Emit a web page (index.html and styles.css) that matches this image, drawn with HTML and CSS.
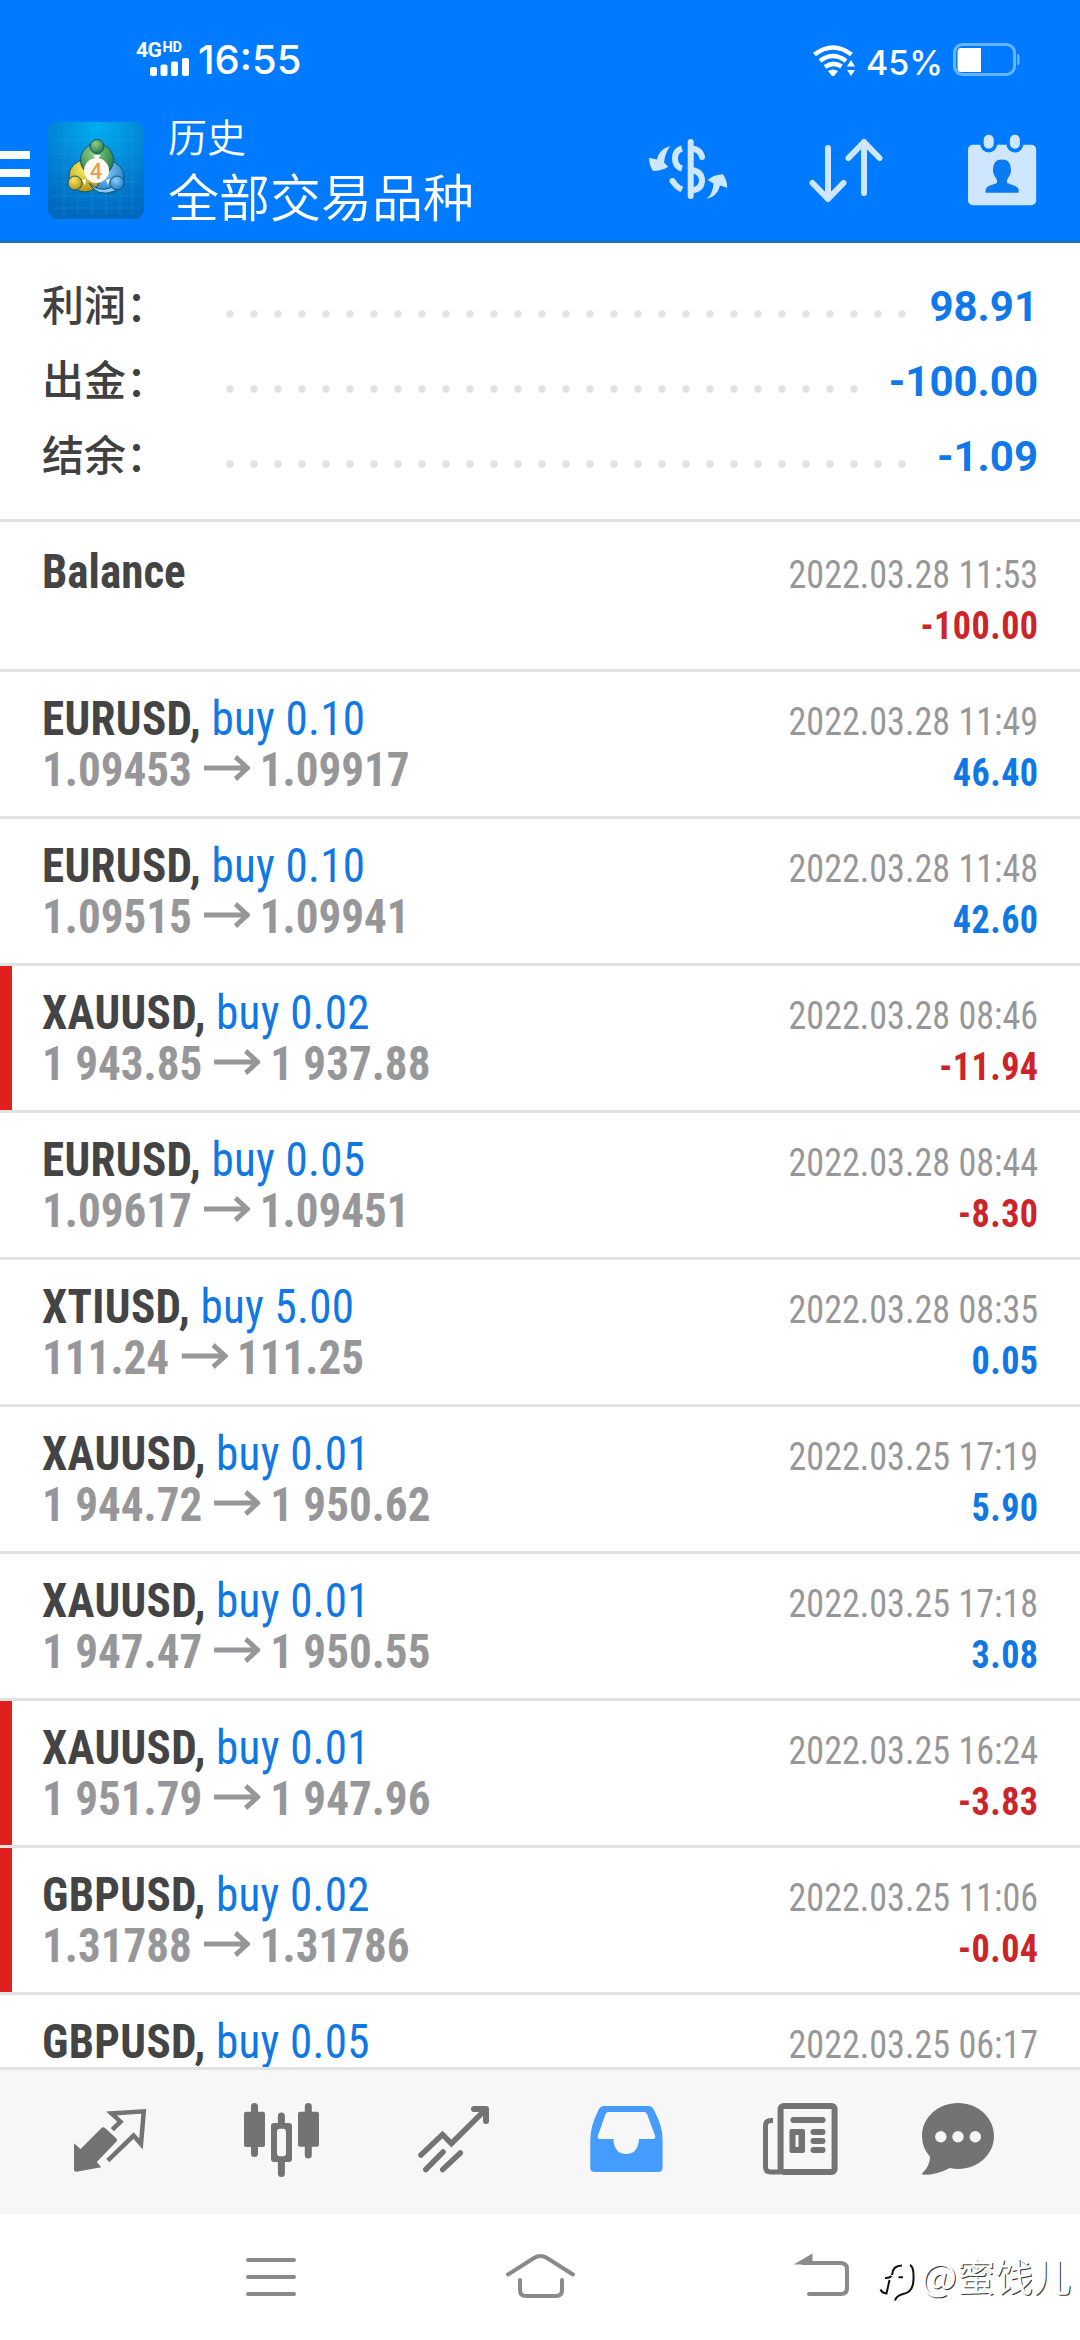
FILE: index.html
```
<!DOCTYPE html>
<html lang="zh-CN">
<head>
<meta charset="utf-8">
<title>历史</title>
<link rel="stylesheet" href="styles.css">
</head>
<body>
<div class="screen">
  <header class="header">
    <div class="status">
      <div class="signal">
        <div class="net"><span class="net-type">4G</span><span class="net-hd">HD</span></div>
        <svg class="bars" width="40" height="18" viewBox="0 0 40 18" fill="#fff"><rect x="0" y="9" width="7" height="9" rx="2"/><rect x="10.5" y="6.5" width="7" height="11.500" rx="2"/><rect x="21" y="3.500" width="7" height="14.500" rx="2"/><rect x="32" y="0" width="7" height="18" rx="2"/></svg>
      </div>
      <span class="clock">16:55</span>
      <svg class="wifi" width="44" height="34" viewBox="0 0 44 34"><g fill="none" stroke="#fff" stroke-width="4.600"><path d="M1.500 10.500Q20 -3.500 38.500 10.500"/><path d="M7 17Q20 7 33 17"/><path d="M12 23Q20 17 28.500 22.500"/></g><path d="M15 27Q20 24 25 27L21.500 31.500Q20 32.500 18.500 31.500ZM38 16L42 22.500H34ZM34 26H42L38 32Z" fill="#fff"/></svg>
      <span class="percent">45%</span>
      <svg class="battery" width="68" height="34" viewBox="0 0 68 34"><rect x="1.500" y="1.500" width="60" height="30" rx="8" fill="none" stroke="#66b5ff" stroke-width="3"/><path d="M8 5H28V29H8Q4.500 29 4.500 25V9Q4.500 5 8 5Z" fill="#fff"/><path d="M64 11H65Q66.500 11 66.500 13V20Q66.500 22 65 22H64Z" fill="#66b5ff"/></svg>
    </div>
    <div class="appbar">
      <div class="menu"><i></i><i></i><i></i></div>
      <svg class="logo" width="96" height="97" viewBox="0 0 96 97">
        <defs>
          <radialGradient id="tile" cx=".52" cy=".05" r=".95"><stop offset="0" stop-color="#00aef0"/><stop offset=".5" stop-color="#0386d6"/><stop offset="1" stop-color="#0068bd"/></radialGradient>
          <radialGradient id="green" cx=".4" cy=".3" r=".8"><stop offset="0" stop-color="#8fcf88"/><stop offset="1" stop-color="#15703a"/></radialGradient>
          <radialGradient id="gold" cx=".4" cy=".3" r=".8"><stop offset="0" stop-color="#fbe75a"/><stop offset="1" stop-color="#a88a10"/></radialGradient>
          <radialGradient id="sky" cx=".4" cy=".3" r=".8"><stop offset="0" stop-color="#8fcdf8"/><stop offset="1" stop-color="#1273c4"/></radialGradient>
        </defs>
        <rect width="96" height="97" rx="9" fill="url(#tile)"/>
        <path d="M16 4V93M30 4V93M44 4V93M58 4V93M72 4V93M84 4V93M4 18H92M4 32H92M4 46H92M4 60H92M4 74H92M4 86H92" stroke="#38b7f2" stroke-opacity=".22"/>
        <g stroke="#0b5577" stroke-width="1">
          <circle cx="60" cy="55" r="16" fill="url(#sky)"/><circle cx="37" cy="54" r="16" fill="url(#gold)"/><circle cx="49" cy="38" r="16.500" fill="url(#green)"/>
          <path d="M41 61Q50 70 62 66Q70 62 72 55Q76 65 67 69Q49 76 41 61Z" fill="#87c8f2"/>
          <circle cx="49" cy="24.500" r="7" fill="url(#green)"/><circle cx="27" cy="61" r="7" fill="url(#gold)"/><circle cx="69" cy="61" r="7" fill="url(#sky)"/>
        </g>
        <path d="M45 33H53L50 37H48ZM34 58L38 57L37 63ZM62 57L60 63L58 58Z" fill="#fff"/>
        <circle cx="48.500" cy="48.500" r="12.500" fill="#fffaf4"/>
        <text x="48" y="56.500" class="logo-digit">4</text>
      </svg>
      <div class="titles"><div class="title">历史</div><div class="subtitle">全部交易品种</div></div>
      <div class="actions">
        <svg width="90" height="76" viewBox="0 0 90 76"><g fill="none" stroke="#cfe6ff" stroke-width="6"><path d="M44.700 10V64" stroke-linecap="round"/><path d="M36 16.500Q29 18.500 29 26.500T36 36.500"/><path d="M36 57.500Q29 54 27 49"/><path d="M46 16.500Q54 17.500 56 24.500"/><path d="M46 38Q56 40 56 48.500T46 58.500"/></g><g fill="#cfe6ff"><circle cx="56" cy="25" r="3"/><circle cx="26.500" cy="49" r="3"/><path d="M24.300 14Q13 17 11 27.500L3 25.700Q3 33 7 39Q15 39 22.300 34.700L18 30.500Q19 21 24.300 14ZM60.300 67Q67 62 67.500 51.500L61.700 48Q68 42.500 77 42.300Q81 48 81.300 55.700L74 53.500Q71 65 60.300 67Z"/></g></svg>
        <svg width="90" height="76" viewBox="0 0 90 76"><path d="M28 16V67M12.500 51L28 67L43.500 51M64 61V10M48.500 26L64 10L79.500 26" fill="none" stroke="#cfe6ff" stroke-width="6" stroke-linecap="round" stroke-linejoin="round"/></svg>
        <svg class="calendar" width="90" height="76" viewBox="0 0 90 76"><rect x="10" y="12.700" width="68.200" height="60.600" rx="5" fill="#cfe6ff"/><g stroke-linecap="round"><path d="M30.700 8V12M56.900 8V12" stroke="#007bff" stroke-width="17"/><path d="M30.700 7.700V11.700M56.900 7.700V11.700" stroke="#cfe6ff" stroke-width="10"/></g><path d="M44 27.500C51 27.500 53 32 53 39C53 42 50 46 49 48V51C54 53 60.500 54 60.700 58V60.700H27.600V58C28 54 34 53 39 51V48C38 46 35 42 35 39C35 32 37 27.500 44 27.500Z" fill="#0b7bf3"/></svg>
      </div>
    </div>
  </header>

  <section class="summary">
    <div class="sum-row"><span class="sum-label">利润：</span><i class="dots short"></i><b>98.91</b></div>
    <div class="sum-row"><span class="sum-label">出金：</span><i class="dots long"></i><b>-100.00</b></div>
    <div class="sum-row"><span class="sum-label">结余：</span><i class="dots short"></i><b>-1.09</b></div>
  </section>

  <main class="deals">
    <article class="deal first"><div class="left"><p><b>Balance</b></p></div><div class="right"><p>2022.03.28 11:53</p><b class="loss">-100.00</b></div></article>
    <article class="deal"><div class="left"><p><b>EURUSD,</b> <span>buy 0.10</span></p><p class="price">1.09453<svg class="arrow" viewBox="0 0 50 26"><path d="M0 13H46M34 2L47 13L34 24"/></svg>1.09917</p></div><div class="right"><p>2022.03.28 11:49</p><b>46.40</b></div></article>
    <article class="deal"><div class="left"><p><b>EURUSD,</b> <span>buy 0.10</span></p><p class="price">1.09515<svg class="arrow" viewBox="0 0 50 26"><path d="M0 13H46M34 2L47 13L34 24"/></svg>1.09941</p></div><div class="right"><p>2022.03.28 11:48</p><b>42.60</b></div></article>
    <article class="deal stopped"><div class="left"><p><b>XAUUSD,</b> <span>buy 0.02</span></p><p class="price">1 943.85<svg class="arrow" viewBox="0 0 50 26"><path d="M0 13H46M34 2L47 13L34 24"/></svg>1 937.88</p></div><div class="right"><p>2022.03.28 08:46</p><b class="loss">-11.94</b></div></article>
    <article class="deal"><div class="left"><p><b>EURUSD,</b> <span>buy 0.05</span></p><p class="price">1.09617<svg class="arrow" viewBox="0 0 50 26"><path d="M0 13H46M34 2L47 13L34 24"/></svg>1.09451</p></div><div class="right"><p>2022.03.28 08:44</p><b class="loss">-8.30</b></div></article>
    <article class="deal"><div class="left"><p><b>XTIUSD,</b> <span>buy 5.00</span></p><p class="price">111.24<svg class="arrow" viewBox="0 0 50 26"><path d="M0 13H46M34 2L47 13L34 24"/></svg>111.25</p></div><div class="right"><p>2022.03.28 08:35</p><b>0.05</b></div></article>
    <article class="deal"><div class="left"><p><b>XAUUSD,</b> <span>buy 0.01</span></p><p class="price">1 944.72<svg class="arrow" viewBox="0 0 50 26"><path d="M0 13H46M34 2L47 13L34 24"/></svg>1 950.62</p></div><div class="right"><p>2022.03.25 17:19</p><b>5.90</b></div></article>
    <article class="deal"><div class="left"><p><b>XAUUSD,</b> <span>buy 0.01</span></p><p class="price">1 947.47<svg class="arrow" viewBox="0 0 50 26"><path d="M0 13H46M34 2L47 13L34 24"/></svg>1 950.55</p></div><div class="right"><p>2022.03.25 17:18</p><b>3.08</b></div></article>
    <article class="deal stopped"><div class="left"><p><b>XAUUSD,</b> <span>buy 0.01</span></p><p class="price">1 951.79<svg class="arrow" viewBox="0 0 50 26"><path d="M0 13H46M34 2L47 13L34 24"/></svg>1 947.96</p></div><div class="right"><p>2022.03.25 16:24</p><b class="loss">-3.83</b></div></article>
    <article class="deal stopped"><div class="left"><p><b>GBPUSD,</b> <span>buy 0.02</span></p><p class="price">1.31788<svg class="arrow" viewBox="0 0 50 26"><path d="M0 13H46M34 2L47 13L34 24"/></svg>1.31786</p></div><div class="right"><p>2022.03.25 11:06</p><b class="loss">-0.04</b></div></article>
    <article class="deal"><div class="left"><p><b>GBPUSD,</b> <span>buy 0.05</span></p></div><div class="right"><p>2022.03.25 06:17</p></div></article>
  </main>

  <nav class="tabs">
    <svg viewBox="0 0 80 80"><path d="M4 41.300L10.600 47L31.500 26Q33.300 24.300 35 26L46.500 36.500Q48 38 46.500 39.500L26.800 60L31.200 65.300L6.500 69.800Q4 70 4 67.500Z" fill="#737373"/><path d="M42.300 27.700L50.500 19.700L41.500 11.500L73.800 9.300L71 42L63.600 33.600L37.800 58.700" fill="none" stroke="#737373" stroke-width="4.500"/></svg>
    <svg viewBox="0 0 80 80"><g stroke="#737373" stroke-width="7" stroke-linecap="round"><path d="M12.500 4.500V51.500M39.400 14V71.500M66.300 4.500V53"/></g><g fill="#737373"><rect x="2" y="9.700" width="21" height="35.300" rx="2"/><rect x="29" y="21" width="21" height="39" rx="3"/><rect x="56" y="9.700" width="21" height="35" rx="2"/></g><rect x="35" y="26.700" width="9" height="27.600" rx="3" fill="#f7f7f7"/></svg>
    <svg viewBox="0 0 80 80"><g fill="none" stroke="#737373" stroke-width="5.500" stroke-linecap="round"><path d="M7 53L28.500 32.500L37.400 41.500L71 8M11.800 67.500L29 50M28.700 67.500L46.300 51"/><path d="M60 7H72V19" stroke-linejoin="round" stroke-width="6"/></g></svg>
    <svg viewBox="0 0 80 80"><path fill-rule="evenodd" d="M18 4H62Q66 4 68 8Q76.600 24 76.600 38V65.500Q76.600 70 72 70H9Q4.300 70 4.300 65.500V38Q4.300 24 12.500 8Q14.500 4 18 4ZM22.500 10Q20.500 10 19.500 12L12 33.500Q11 37 13.500 37H27.500Q28 52 40.300 52Q52 52 53 37H67Q70 37 69 33.500L61 12Q60 10 58 10Z" fill="#449cfd"/></svg>
    <svg class="news" viewBox="0 0 80 80"><g fill="none" stroke="#737373" stroke-width="6" stroke-linecap="round"><rect x="20.600" y="4" width="54" height="66" rx="3"/><path d="M13 18.500H11Q5.500 18.500 5.500 23.500V65Q5.500 70 11 70H20" stroke-width="5" stroke-linecap="butt"/><path d="M33.500 18H62.500M53.500 30H62.500M53.500 39H62.500M53.500 48H62.500"/></g><path fill-rule="evenodd" d="M31.500 27H43Q45 27 45 29V49Q45 51 43 51H31.500Q29.500 51 29.500 49V29Q29.500 27 31.500 27ZM35.500 33V45H38.500V33Z" fill="#737373"/></svg>
    <svg class="chat" viewBox="0 0 80 80"><path d="M40 1C60 1 76 15.500 76 34S60 67 40 67Q36 67 31.800 66Q19 73 5 72.800Q3.500 72 4.500 71Q12 64 12 54.700Q4 46 4 34C4 15.500 20 1 40 1Z" fill="#737373"/><g fill="#f7f7f7"><circle cx="22.800" cy="34.700" r="5.700"/><circle cx="40" cy="34.700" r="5.700"/><circle cx="57.300" cy="34.700" r="5.700"/></g></svg>
  </nav>
  <nav class="sysnav">
    <svg viewBox="0 0 90 60"><path d="M22 13H68M22 30H68M22 47H68"/></svg>
    <svg viewBox="0 0 90 60"><path d="M12 27.500L38 11Q44.500 7 51 11L77 27.500M24 33V43Q24 49 30 49H60Q66 49 66 43V33"/></svg>
    <svg viewBox="0 0 90 60"><path d="M37 16H74Q81 16 81 22V41Q81 47 75 47H43"/><path d="M35 15.500L44.500 10V15.500Z"/></svg>
    <div class="watermark">
      <svg width="44" height="46" viewBox="0 0 44 46"><g fill="none" stroke="#111" stroke-width="2"><path d="M15 19Q15.500 9.500 25 9.500M8 22Q12 22.500 14.500 20M21.500 21.300H26M12.500 24L9.500 37.500Q5 37 3.500 33.500"/><path d="M33 9Q37 11 36.500 22Q37 36 26 38Q19 40 18 44.500"/></g></svg>
      <span>@蜜饯儿</span>
    </div>
  </nav>
</div>
</body>
</html>
```
FILE: styles.css
```
* { box-sizing: border-box; margin: 0; padding: 0; }
body { background: #fff; font-family: Roboto, "Noto Sans CJK SC", sans-serif; }
.screen { width: 1080px; height: 2340px; display: flex; flex-direction: column; overflow: hidden; }

.header { flex: none; height: 243px; background: #007bff; border-bottom: 3px solid #1a70c4; color: #fff; }
.status { height: 112px; display: flex; align-items: flex-start; padding: 42px 59px 0 136px; }
.signal { width: 62px; display: flex; flex-direction: column; height: 36px; }
.net { display: flex; align-items: flex-start; height: 16px; font-weight: 700; }
.net-type { font-size: 21px; line-height: 16px; letter-spacing: -.5px; margin-right: 1px; }
.net-hd { font-size: 14.500px; line-height: 11px; }
.bars { margin-left: 14px; }
.clock { font: 500 40px/36px Inter, sans-serif; }
.wifi { margin: 2px 9px 0 auto; }
.percent { font: 500 34px/41px Inter, sans-serif; }
.battery { margin-left: 10px; margin-top: 1px; }

.appbar { display: flex; height: 128px; }
.menu { width: 48px; padding-top: 39px; display: flex; flex-direction: column; gap: 10px; }
.menu i { width: 30px; height: 8px; background: #fff; }
.logo { margin-top: 10px; }
.logo-digit { font: 500 22px Roboto, sans-serif; fill: #f09a4a; text-anchor: middle; }
.titles { margin: -2px 0 0 24px; font-family: "Noto Sans CJK SC", sans-serif; font-weight: 350; }
.title { font-size: 39px; line-height: 50px; }
.subtitle { font-size: 51px; line-height: 70px; }
.actions { margin-left: auto; padding: 20px 32px 0 0; display: flex; gap: 64px; }
.calendar { margin-left: 4px; }

.summary { flex: none; height: 279px; padding: 24px 42px 0; border-bottom: 3px solid #e2e2e2; }
.sum-row { height: 75px; display: flex; font-size: 42px; }
.sum-label { width: 176px; font-family: "Noto Sans CJK SC", sans-serif; font-weight: 500; line-height: 72px; color: #404040; }
.dots { height: 24px; margin-top: 35px; background: radial-gradient(circle, #e2e2e2 3.400px, transparent 4px) 0 0 / 24px 24px repeat-x; }
.dots.short { width: 696px; }
.dots.long { width: 648px; }
.sum-row b { margin-left: auto; line-height: 79px; color: #1078e8; }

.deals { flex: none; height: 1545px; overflow: hidden; font-stretch: 75%; }
.deal { height: 147px; padding: 21px 42px 0; border-bottom: 3px solid #e2e2e2; display: flex; justify-content: space-between; white-space: nowrap; }
.deal.first { height: 150px; padding-top: 24px; }
.deal.stopped { padding-left: 30px; border-left: 12px solid #e21f1f; border-bottom: 0; height: 144px; margin-bottom: 3px; box-shadow: 0 3px #e2e2e2; }
.left { font-size: 48.500px; line-height: 51px; color: #444; transform: scaleX(.93); transform-origin: left; }
.deal:not(.first) .left b { letter-spacing: .35px; }
.left span { color: #1078e4; letter-spacing: .25px; }
.price { color: #97979a; font-weight: 700; }
.arrow { width: 50px; height: 26px; margin: 0 10px 0 13px; vertical-align: 5px; fill: none; stroke: #97979a; stroke-width: 5; }
.right { font-size: 39.500px; line-height: 51px; color: #97979a; text-align: right; transform: scaleX(.914); transform-origin: right; padding-top: 3px; }
.right b { display: block; color: #1078e4; letter-spacing: .5px; margin-right: -.5px; }
.right .loss { color: #cc2428; }

.tabs { flex: none; height: 147px; background: #f7f7f7; border-top: 3px solid #e2e2e2; padding-left: 24px; display: grid; grid-template-columns: repeat(6, 172px); place-items: center; }
.tabs svg { width: 80px; height: 80px; }
.tabs .news { margin-left: 4px; }
.tabs .chat { margin-right: 24px; }

.sysnav { position: relative; flex: 1; padding-left: 136px; display: grid; grid-template-columns: repeat(3, 270px); place-items: center; }
.sysnav > svg { width: 90px; height: 60px; fill: none; stroke: #8a8a8a; stroke-width: 4; stroke-linecap: round; }
.watermark { position: absolute; left: 877px; top: 34px; height: 54px; display: flex; align-items: center; color: #fff; font: 400 38px/54px "Noto Sans CJK SC", sans-serif; text-shadow: 1px 1px 0 #333; }
.watermark svg { margin-top: 8px; }
```
